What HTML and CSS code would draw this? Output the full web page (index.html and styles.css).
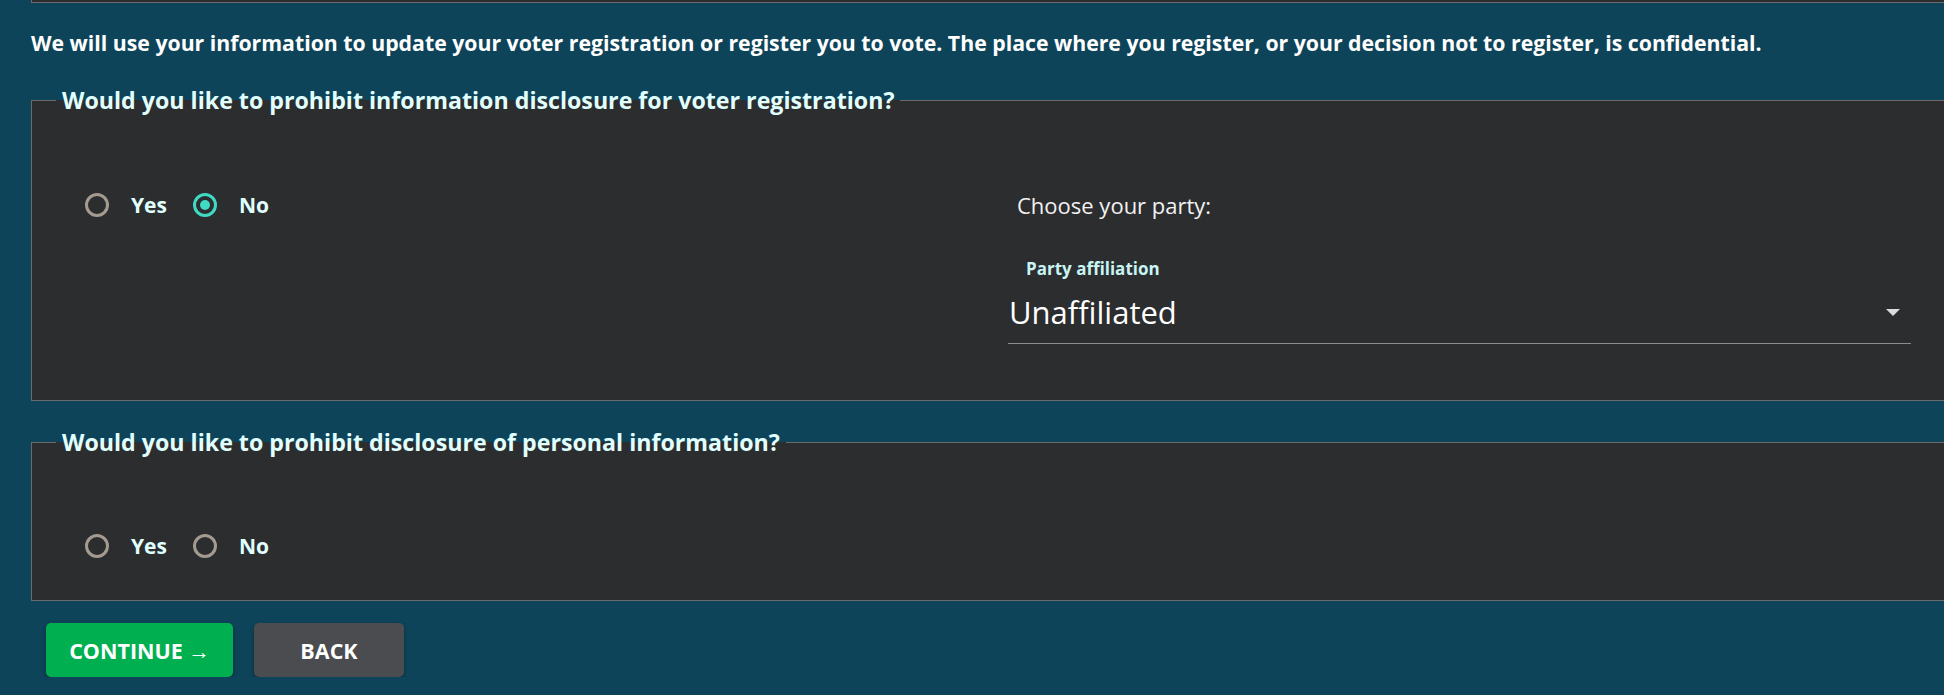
FILE: index.html
```html
<!DOCTYPE html>
<html lang="en">
<head>
<meta charset="utf-8">
<title>Voter registration</title>
<link rel="stylesheet" href="styles.css">
</head>
<body>
<div class="page">
  <div class="prev-box"></div>
  <p class="intro">We will use your information to update your voter registration or register you to vote. The place where you register, or your decision not to register, is confidential.</p>

  <fieldset class="group group-voter">
    <legend>Would you like to prohibit information disclosure for voter registration?</legend>
    <div class="group-body two-col">
      <div class="col-left">
        <div class="radios">
          <label class="radio"><span class="circle"></span><span class="radio-label">Yes</span></label>
          <label class="radio checked"><span class="circle"></span><span class="radio-label">No</span></label>
        </div>
      </div>
      <div class="col-right">
        <p class="choose">Choose your party:</p>
        <div class="select">
          <span class="select-label">Party affiliation</span>
          <div class="select-field">
            <span class="select-value">Unaffiliated</span>
            <svg class="select-arrow" width="14" height="7" viewBox="0 0 14 7"><polygon points="0,0 14,0 7,7" fill="#dcdcdc"/></svg>
          </div>
        </div>
      </div>
    </div>
  </fieldset>

  <fieldset class="group group-personal">
    <legend>Would you like to prohibit disclosure of personal information?</legend>
    <div class="group-body single">
      <div class="radios">
        <label class="radio"><span class="circle"></span><span class="radio-label">Yes</span></label>
        <label class="radio"><span class="circle"></span><span class="radio-label">No</span></label>
      </div>
    </div>
  </fieldset>

  <div class="actions">
    <button class="btn btn-continue">CONTINUE →</button>
    <button class="btn btn-back">BACK</button>
  </div>
</div>
</body>
</html>
```

FILE: styles.css
```css
html, body {
  margin: 0;
  background: #0e4459;
  font-family: "Open Sans", "Liberation Sans", sans-serif;
  overflow: hidden;
}

.page {
  padding: 0 0 0 31px;
}

.prev-box {
  height: 2px;
  background: #2c2d2f;
  border-left: 1px solid #6b6b6b;
  border-bottom: 1px solid #6b6b6b;
}

.intro {
  margin: 26px 0 0;
  font-size: 21.25px;
  line-height: 28px;
  font-weight: 700;
  color: #ffffff;
  white-space: nowrap;
}

.group {
  margin: 28px 0 0;
  padding: 0;
  border: 1px solid #6b6b6b;
  border-right: 0;
  background: #2c2d2f;
  min-width: 0;
}

.group-personal {
  margin-top: 26px;
}

.group legend {
  margin-left: 24px;
  padding: 0 6px;
  font-size: 23.2px;
  line-height: 30px;
  font-weight: 700;
  color: #e0ffff;
}

.two-col {
  display: grid;
  grid-template-columns: 976px 903px;
  padding: 75px 0 56px;
}

.single {
  padding: 74px 0 39px 53px;
}

.col-left {
  padding-left: 53px;
}

.radios {
  display: flex;
  align-items: center;
  height: 30px;
  gap: 26px;
}

.radio {
  display: flex;
  align-items: center;
  gap: 22px;
  cursor: pointer;
}

.circle {
  width: 18px;
  height: 18px;
  border: 3px solid #a39a90;
  border-radius: 50%;
  display: flex;
  align-items: center;
  justify-content: center;
}

.radio.checked .circle {
  border-color: #3fd9c4;
}

.radio.checked .circle::after {
  content: "";
  width: 10px;
  height: 10px;
  border-radius: 50%;
  background: #3fd9c4;
}

.radio-label {
  font-size: 21px;
  line-height: 30px;
  font-weight: 700;
  color: #e0ffff;
}

.choose {
  margin: 0;
  padding-left: 9px;
  font-size: 22px;
  line-height: 30px;
  color: #f2f2f2;
}

.select {
  margin-top: 39px;
}

.select-label {
  display: block;
  padding-left: 18px;
  font-size: 17px;
  line-height: 20px;
  font-weight: 700;
  color: #c8f4f4;
}

.select-field {
  margin-top: 13px;
  display: flex;
  align-items: center;
  justify-content: space-between;
  height: 40px;
  padding: 0 11px 11px 1px;
  border-bottom: 1px solid #8a8d90;
}

.select-value {
  font-size: 31px;
  line-height: 40px;
  color: #ffffff;
}

.actions {
  display: flex;
  gap: 21px;
  margin: 22px 0 0 15px;
}

.btn {
  height: 54px;
  border: 0;
  border-radius: 5px;
  font-family: "Open Sans", sans-serif;
  font-size: 21.5px;
  font-weight: 700;
  color: #ffffff;
  box-shadow: 0 2px 4px rgba(0, 0, 0, 0.35);
  cursor: pointer;
}

.btn-continue {
  width: 187px;
  background: #00b050;
}

.btn-back {
  width: 150px;
  background: #4a4c4f;
}
```
